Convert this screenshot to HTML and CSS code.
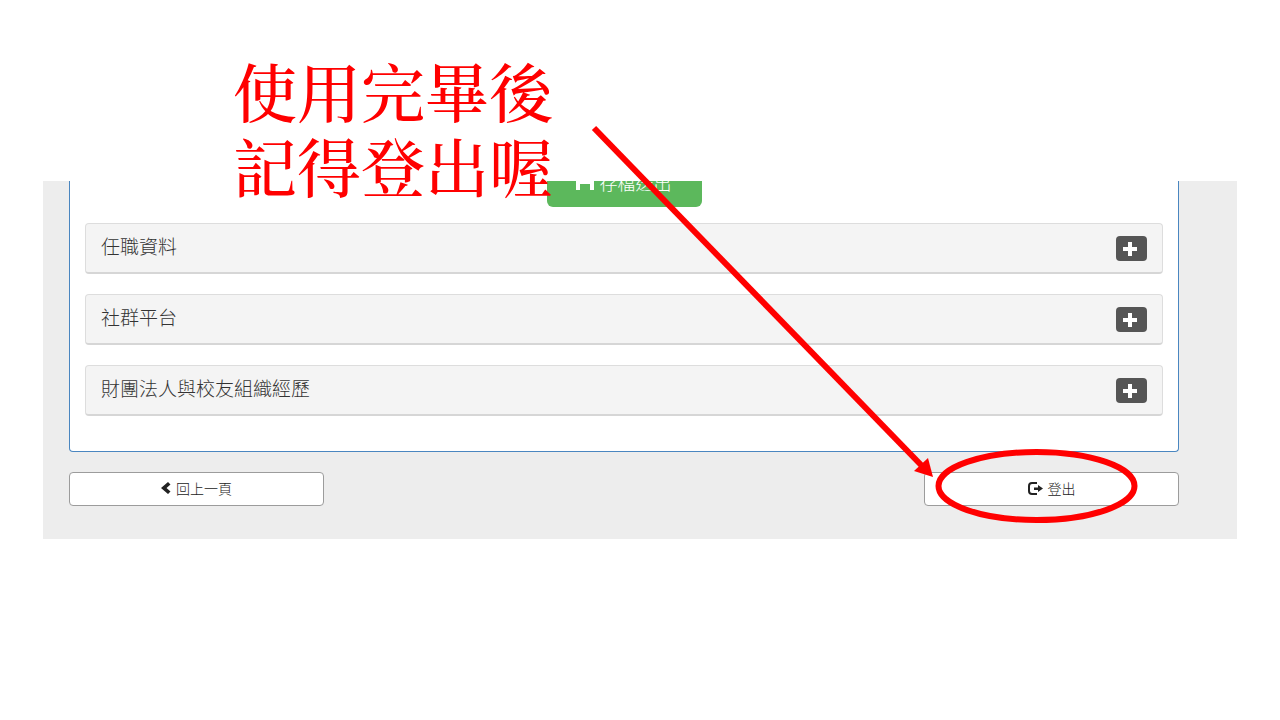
FILE: index.html
```html
<!DOCTYPE html>
<html lang="zh-Hant">
<head>
<meta charset="utf-8">
<title>登出說明</title>
<link rel="stylesheet" href="styles.css">
</head>
<body>
<div class="slide">
  <main class="capture">
    <section class="form-panel">
      <button class="save" type="button">
        <svg class="save-icon" viewBox="0 0 18 18" aria-hidden="true"><path d="M0 0h15l3 3v14h-4v-6H4v6H0z"/></svg>
        <span>存檔送出</span>
      </button>
      <div class="row">
        <h2>任職資料</h2>
        <button class="expand" type="button" aria-label="展開任職資料"><svg viewBox="0 0 14 14"><path d="M5 0h4v5h5v4H9v5H5V9H0V5h5z"/></svg></button>
      </div>
      <div class="row">
        <h2>社群平台</h2>
        <button class="expand" type="button" aria-label="展開社群平台"><svg viewBox="0 0 14 14"><path d="M5 0h4v5h5v4H9v5H5V9H0V5h5z"/></svg></button>
      </div>
      <div class="row">
        <h2>財團法人與校友組織經歷</h2>
        <button class="expand" type="button" aria-label="展開財團法人與校友組織經歷"><svg viewBox="0 0 14 14"><path d="M5 0h4v5h5v4H9v5H5V9H0V5h5z"/></svg></button>
      </div>
    </section>
    <nav class="actions">
      <button class="action" type="button">
        <svg class="back-icon" viewBox="0 0 10 12" aria-hidden="true"><path d="M7 0 9.500 2.500 5.500 6l4 3.500L7 12 0 6z"/></svg>
        <span>回上一頁</span>
      </button>
      <button class="action" type="button">
        <svg class="logout-icon" viewBox="0 0 15 13" aria-hidden="true"><path class="frame" d="M9 1H4Q1 1 1 4v5Q1 12 4 12H9"/><path d="M6 5.500h4V3L15 6.500l-5 3.500V8H6z"/></svg>
        <span>登出</span>
      </button>
    </nav>
  </main>
  <h1 class="note">使用完畢後<br>記得登出喔</h1>
  <svg class="marks" viewBox="0 0 1280 720" aria-hidden="true">
    <path class="stroke" d="M594 128 924 468"/>
    <path class="head" d="M933 477 914 471 928 458z"/>
    <ellipse class="stroke" cx="1036.500" cy="486" rx="98" ry="34"/>
  </svg>
</div>
</body>
</html>
```
FILE: styles.css
```css
* {
  box-sizing: border-box;
}

body {
  margin: 0;
  background: #fff;
  color: #333;
  font-family: "Liberation Sans", "Noto Sans CJK TC", sans-serif;
  font-weight: 300;
}

button {
  font: inherit;
  cursor: pointer;
}

.slide {
  position: relative;
  min-height: 100vh;
  padding: 181px 43px 0;
}

.capture {
  overflow: hidden;
  padding: 0 58px 33px 26px;
  background: #ededed;
}

.form-panel {
  display: flex;
  flex-direction: column;
  gap: 20px;
  padding: 0 15px 35px;
  border: 1px solid #4a86c0;
  border-top: 0;
  border-radius: 0 0 4px 4px;
  background: #fff;
}

.save {
  display: flex;
  align-items: center;
  justify-content: center;
  gap: 6px;
  align-self: center;
  width: 155px;
  height: 46px;
  margin: -20px 0 -4px;
  padding: 0 1px 4px 0;
  border: 0;
  border-radius: 6px;
  background: #5cb85c;
  color: #fff;
  font-size: 18px;
  font-weight: 300;
}

.save-icon {
  width: 18px;
  height: 18px;
  fill: #fff;
}

.row {
  display: flex;
  align-items: center;
  justify-content: space-between;
  height: 51px;
  padding: 0 15px;
  border: 1px solid #ddd;
  border-bottom: 2px solid #d6d6d6;
  border-radius: 4px;
  background: #f4f4f4;
}

.row h2 {
  margin: 0;
  font-size: 19px;
  line-height: 24px;
  font-weight: 300;
}

.expand {
  display: flex;
  align-items: center;
  justify-content: center;
  width: 31px;
  height: 25px;
  padding: 1px 3px 0 0;
  border: 0;
  border-radius: 4px;
  background: #555;
}

.expand svg {
  width: 14px;
  height: 14px;
  fill: #fff;
}

.actions {
  display: flex;
  justify-content: space-between;
  margin-top: 20px;
}

.action {
  display: flex;
  align-items: center;
  justify-content: center;
  gap: 5px;
  width: 255px;
  height: 34px;
  padding: 0 0 2px;
  border: 1px solid #9c9c9c;
  border-radius: 4px;
  background: #fff;
  color: #222;
  font-size: 14px;
}

.back-icon {
  width: 10px;
  height: 12px;
}

.logout-icon {
  width: 15px;
  height: 13px;
}

.action svg {
  fill: #222;
}

.action .frame {
  fill: none;
  stroke: #222;
  stroke-width: 2;
}

.note {
  position: absolute;
  top: 52px;
  left: 233px;
  margin: 0;
  color: #f00;
  font-family: "PMingLiU", "Noto Serif CJK TC", "Noto Sans CJK TC", serif;
  font-size: 64px;
  line-height: 75px;
  font-weight: 500;
}

.marks {
  position: absolute;
  top: 0;
  left: 0;
  width: 100%;
  pointer-events: none;
}

.marks .stroke {
  fill: none;
  stroke: #f00;
  stroke-width: 6;
}

.marks .head {
  fill: #f00;
}
```
